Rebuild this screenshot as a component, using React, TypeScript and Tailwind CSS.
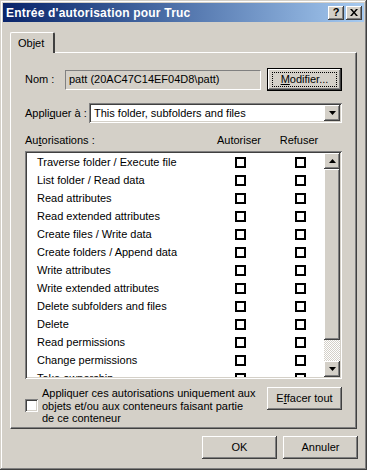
const raised =
  'shadow-[inset_-1px_-1px_0_#404040,inset_1px_1px_0_#ffffff,inset_-2px_-2px_0_#808080,inset_2px_2px_0_#d4d0c8]';
const sunken =
  'shadow-[inset_1px_1px_0_#808080,inset_-1px_-1px_0_#ffffff,inset_2px_2px_0_#404040,inset_-2px_-2px_0_#d4d0c8]';

const permissions = [
  'Traverse folder / Execute file',
  'List folder / Read data',
  'Read attributes',
  'Read extended attributes',
  'Create files / Write data',
  'Create folders / Append data',
  'Write attributes',
  'Write extended attributes',
  'Delete subfolders and files',
  'Delete',
  'Read permissions',
  'Change permissions',
  'Take ownership',
];

function Arrow({ up }: { up?: boolean }) {
  return (
    <svg width="7" height="4" viewBox="0 0 7 4" className="block">
      {up ? <path d="M3.5 0 L7 4 L0 4 Z" fill="#000" /> : <path d="M0 0 L7 0 L3.5 4 Z" fill="#000" />}
    </svg>
  );
}

function ScrollBtn({ up }: { up?: boolean }) {
  return (
    <div className={`w-[16px] h-[16px] bg-[#d4d0c8] flex items-center justify-center ${raised}`}>
      <Arrow up={up} />
    </div>
  );
}

function Btn({ children, className = '' }: { children: React.ReactNode; className?: string }) {
  return (
    <div className={`h-[23px] bg-[#d4d0c8] flex items-center justify-center text-[11px] text-black ${raised} ${className}`}>
      {children}
    </div>
  );
}

export default function App() {
  return (
    <div
      className="w-[367px] h-[470px] bg-[#d4d0c8] p-[3px] flex flex-col text-[11px] text-black shadow-[inset_-1px_-1px_0_#404040,inset_1px_1px_0_#d4d0c8,inset_-2px_-2px_0_#808080,inset_2px_2px_0_#ffffff]"
      style={{ fontFamily: '"Liberation Sans", Arial, sans-serif' }}
    >
      {/* title bar */}
      <div className="h-[19px] flex items-center justify-between pl-[3px] pr-[2px] bg-gradient-to-r from-[#0a246a] to-[#a6caf0]">
        <span className="text-white font-bold text-[12px] tracking-[0.2px]">Entrée d'autorisation pour Truc</span>
        <div className="flex items-center gap-[2px]">
          <div className={`w-[16px] h-[14px] bg-[#d4d0c8] flex items-center justify-center font-bold text-[11px] leading-none ${raised}`}>?</div>
          <div className={`w-[16px] h-[14px] bg-[#d4d0c8] flex items-center justify-center ${raised}`}>
            <svg width="8" height="7" viewBox="0 0 8 7">
              <path d="M0 0 L2 0 L4 2.5 L6 0 L8 0 L5 3.5 L8 7 L6 7 L4 4.5 L2 7 L0 7 L3 3.5 Z" fill="#000" />
            </svg>
          </div>
        </div>
      </div>

      {/* tab strip */}
      <div className="mt-[10px] px-[7px]">
        <div className="relative z-10 w-[45px] h-[21px] -mb-[1px] bg-[#d4d0c8] border-l border-t border-white border-r-2 border-r-[#404040] rounded-t-[2px] flex items-center pl-[7px]">
          Objet
        </div>
      </div>

      {/* tab panel */}
      <div className="mx-[7px] h-[377px] border-l border-t border-white border-r border-b border-r-[#404040] border-b-[#404040] shadow-[inset_-1px_-1px_0_#808080] px-[14px] pt-[15px] flex flex-col">
        {/* Nom */}
        <div className="flex items-center h-[23px]">
          <span className="w-[40px]">Nom :</span>
          <div className="w-[196px] h-[20px] border border-[#808080] border-r-white border-b-white flex items-center pl-[3px]">
            patt (20AC47C14EF04D8\patt)
          </div>
          <div className="ml-auto w-[75px] h-[23px] border border-black">
            <div className={`w-full h-full bg-[#d4d0c8] flex items-center justify-center ${raised}`}>
              <span className="border border-dotted border-black px-[8px] leading-[13px]">
                <span className="underline">M</span>odifier...
              </span>
            </div>
          </div>
        </div>

        {/* Appliquer */}
        <div className="flex items-center mt-[12px] h-[20px]">
          <span className="w-[64px]">
            Appli<span className="underline">q</span>uer à :
          </span>
          <div className={`flex-1 h-[20px] bg-white flex items-center pl-[5px] pr-[2px] ${sunken}`}>
            <span className="flex-1">This folder, subfolders and files</span>
            <ScrollBtn />
          </div>
        </div>

        {/* header */}
        <div className="flex items-center mt-[10px] h-[15px]">
          <span className="flex-1">
            Au<span className="underline">t</span>orisations :
          </span>
          <span className="w-[60px] text-center">Autoriser</span>
          <span className="w-[60px] text-center">Refuser</span>
          <span className="w-[13px]" />
        </div>

        {/* list */}
        <div className={`mt-[3px] h-[228px] bg-white p-[2px] flex ${sunken}`}>
          <div className="flex-1 overflow-hidden">
            {permissions.map((p) => (
              <div key={p} className="flex items-center h-[18px]">
                <span className="w-[200px] pl-[10px] whitespace-nowrap">{p}</span>
                <div className="w-[26px] flex justify-center">
                  <div className="w-[11px] h-[11px] border-2 border-black" />
                </div>
                <div className="w-[34px]" />
                <div className="w-[26px] flex justify-center">
                  <div className="w-[11px] h-[11px] border-2 border-black" />
                </div>
              </div>
            ))}
          </div>
          <div className="w-[16px] flex flex-col">
            <ScrollBtn up />
            <div className={`h-[171px] bg-[#d4d0c8] ${raised}`} />
            <div className="flex-1 bg-[repeating-conic-gradient(#ffffff_0_25%,#d4d0c8_0_50%)] bg-[length:2px_2px]" />
            <ScrollBtn />
          </div>
        </div>

        {/* bottom */}
        <div className="flex mt-[8px]">
          <div className="flex items-center">
            <div className={`w-[13px] h-[13px] bg-white ${sunken}`} />
          </div>
          <div className="ml-[4px] leading-[12.5px] whitespace-nowrap">
            <div>Appliquer ces autorisations uniquement aux</div>
            <div>objets et/ou aux conteneurs faisant partie</div>
            <div>de ce conteneur</div>
          </div>
          <Btn className="ml-auto w-[75px]">
            E<span className="underline">f</span>facer tout
          </Btn>
        </div>
      </div>

      {/* dialog buttons */}
      <div className="flex justify-end gap-[6px] mt-[7px] pr-[6px]">
        <Btn className="w-[75px]">OK</Btn>
        <Btn className="w-[75px]">Annuler</Btn>
      </div>
    </div>
  );
}
